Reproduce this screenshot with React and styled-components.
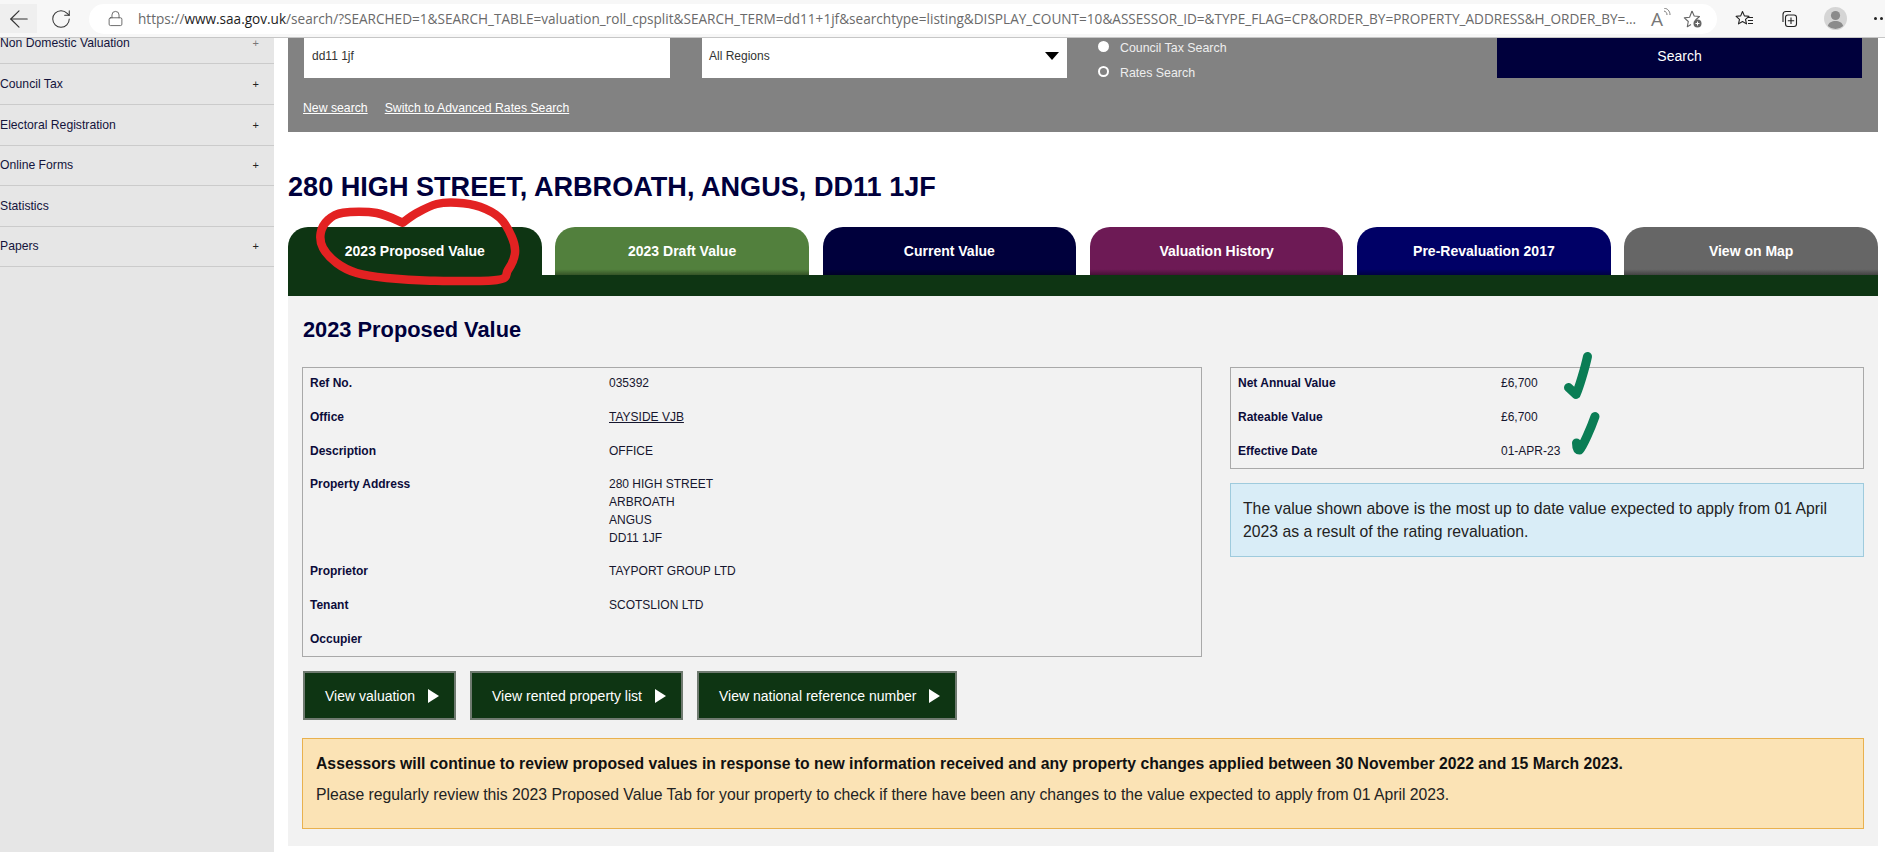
import React from 'react'
import styled, { createGlobalStyle } from 'styled-components'
import { ArrowLeft, RotateCw, Lock } from 'lucide-react'

const GlobalStyle = createGlobalStyle`
  html, body {
    margin: 0;
    background: #fff;
    overflow: hidden;
    font-family: "Liberation Sans", Arial, sans-serif;
  }
  * { box-sizing: border-box; }
`

const Page = styled.div`
  position: relative;
  width: 1885px;
  height: 852px;
  overflow: hidden;
  background: #fff;
`

/* browser chrome */
const Toolbar = styled.div`
  position: relative;
  z-index: 1;
  height: 38px;
  margin-bottom: -1px;
  display: flex;
  align-items: center;
  background: #f7f7f7;
  border-bottom: 1px solid #c6c6c6;
  overflow: hidden;
`
const BackButton = styled.div`
  width: 37px;
  height: 29px;
  flex: none;
  display: flex;
  align-items: center;
  justify-content: center;
  background: #efefef;
  color: #333;
`
const ReloadSlot = styled.div`
  width: 48px;
  margin-right: 4px;
  flex: none;
  display: flex;
  justify-content: center;
  color: #333;
`
const AddressPill = styled.div`
  width: 1628px;
  height: 30px;
  margin-right: 6px;
  flex: none;
  display: flex;
  align-items: center;
  padding: 0 13px 0 18px;
  background: #fff;
  border-radius: 15px;
  color: #555;
`
const Url = styled.div`
  width: 1498px;
  margin-left: 14px;
  flex: none;
  white-space: nowrap;
  overflow: hidden;
  font-family: "Open Sans", sans-serif;
  font-size: 13.6px;
  color: #6a6a6a;
  b { font-weight: 400; color: #1c1c1c; }
`
const ReadAloud = styled.div`
  width: 24px;
  margin-left: 15px;
  flex: none;
  display: flex;
  color: #777;
  font-family: "Open Sans", sans-serif;
  font-size: 19px;
  line-height: 22px;
`
const PillStar = styled.div`
  margin-left: 8px;
  flex: none;
  display: flex;
`
const ToolSlot = styled.div`
  width: 44px;
  flex: none;
  display: flex;
  justify-content: center;
`
const AvatarSlot = styled(ToolSlot)`
  margin-left: 2px;
`
const Dots = styled.div`
  margin-left: 17px;
  flex: none;
  display: flex;
  gap: 3px;
  span {
    width: 3px;
    height: 3px;
    border-radius: 50%;
    background: #222;
  }
`

const Layout = styled.div`
  display: grid;
  grid-template-columns: 274px 1590px;
  column-gap: 14px;
  height: 815px;
`

/* left menu */
const Sidebar = styled.nav`
  background: #e6e6e6;
  overflow: hidden;
`
const MenuRow = styled.div`
  height: ${p => p.$h}px;
  display: flex;
  align-items: flex-end;
  justify-content: space-between;
  padding: 0 15px 11px 0;
  border-bottom: 1px solid #cbcbcb;
  font-size: 12.2px;
  line-height: 18px;
  color: #14143c;
`
const Plus = styled.span`
  color: ${p => (p.$faint ? '#777' : '#222')};
  font-size: 11px;
`

/* search band */
const SearchBand = styled.section`
  height: 95px;
  background: #828282;
  padding: 0 16px;
`
const SearchRow = styled.div`
  height: 41px;
  display: grid;
  grid-template-columns: 366px 365px 366px 365px;
  grid-template-rows: 41px;
  column-gap: 32px;
`
const TextBox = styled.div`
  background: #fff;
  padding: 10px 8px 0;
  font-size: 12px;
  line-height: 18px;
  color: #333;
`
const SelectBox = styled(TextBox)`
  display: flex;
  justify-content: space-between;
  padding-left: 7px;
`
const SelectArrow = styled.i`
  width: 0;
  height: 0;
  margin-top: 5px;
  border-left: 7px solid transparent;
  border-right: 7px solid transparent;
  border-top: 8px solid #000;
`
const RadioGroup = styled.div`
  margin-left: -1px;
  display: flex;
  flex-direction: column;
  gap: 7px;
`
const RadioItem = styled.div`
  display: flex;
  align-items: center;
  gap: 11px;
  height: 18px;
  flex: none;
  font-size: 12.4px;
  color: #eee;
  span { padding-top: 3px; }
`
const RadioDot = styled.i`
  width: 11px;
  height: 11px;
  border-radius: 50%;
  border: 2px solid #fff;
  background: ${p => (p.$on ? '#fff' : 'transparent')};
`
const SearchButton = styled.div`
  background: #00003c;
  color: #fff;
  font-size: 14px;
  line-height: 19px;
  text-align: center;
  padding-top: 10px;
`
const SearchLinks = styled.div`
  margin: 21px 0 0 -1px;
  display: flex;
  gap: 17px;
  font-size: 12.25px;
  line-height: 18px;
  a { color: #fff; text-decoration: underline; }
`

const Title = styled.h1`
  margin: 39px 0 24px;
  font-size: 27.1px;
  line-height: 32px;
  font-weight: 700;
  color: #00003c;
`

/* tabs */
const Tabs = styled.div`
  display: grid;
  grid-template-columns: repeat(6, 1fr);
  column-gap: 13.6px;
`
const Tab = styled.div`
  height: 48px;
  display: flex;
  align-items: center;
  justify-content: center;
  border-radius: 20px 20px 0 0;
  background: ${p => p.$active
    ? p.$bg
    : `linear-gradient(${p.$bg} 88%, rgba(0,0,0,0.35) 100%), ${p.$bg}`};
  color: #fff;
  font-size: 14px;
  font-weight: 700;
`
const TabBand = styled.div`
  height: 21px;
  background: #0e3513;
`

const Panel = styled.section`
  height: 550px;
  background: #f2f2f2;
  padding: 19px 14px 0;
`
const PanelTitle = styled.h2`
  margin: 0 0 22px;
  padding-left: 1px;
  font-size: 21.8px;
  line-height: 30px;
  font-weight: 700;
  color: #00003c;
`
const Columns = styled.div`
  display: grid;
  grid-template-columns: 900px 634px;
  column-gap: 28px;
`
const DataTable = styled.dl`
  margin: 0;
  padding: 6px 8px 8px 7px;
  border: 1px solid #a9a9a9;
  font-size: 12px;
  line-height: 18px;
`
const DataRow = styled.div`
  display: grid;
  grid-template-columns: ${p => p.$label}px 1fr;
  margin-bottom: ${p => p.$after ?? 16}px;
  &:last-child { margin-bottom: 0; }
  dt { font-weight: 700; color: #0c0c3a; min-height: 18px; }
  dd { margin: 0; color: #16162e; }
  a { color: inherit; text-decoration: underline; }
`
const InfoColumn = styled.div`
  display: flex;
  flex-direction: column;
  align-items: stretch;
  align-self: start;
`
const InfoBox = styled.div`
  margin-top: 14px;
  height: 74px;
  padding: 13px 12px 0;
  background: #d9edf7;
  border: 1px solid #9fcbdd;
  font-size: 15.75px;
  line-height: 23px;
  color: #222;
`
const ActionRow = styled.div`
  margin-top: 14px;
  padding-left: 1px;
  display: flex;
  gap: 14px;
`
const ActionButton = styled.div`
  height: 49px;
  display: flex;
  align-items: center;
  gap: 13px;
  padding: 0 15px 0 20px;
  background: #0e3513;
  border: 2px solid #6f7a70;
  color: #fff;
  font-size: 14px;
`
const Arrow = styled.i`
  width: 0;
  height: 0;
  border-top: 7px solid transparent;
  border-bottom: 7px solid transparent;
  border-left: 11px solid #fff;
`
const Notice = styled.div`
  margin-top: 18px;
  height: 91px;
  padding: 13px 13px 0;
  background: #fbe3b5;
  border: 1px solid #e9b14e;
  font-size: 15.75px;
  line-height: 23px;
  color: #111;
  p { margin: 8px 0 0; color: #222; }
  strong { font-weight: 700; }
`

/* the pen marks someone drew over the screenshot */
const InkLayer = styled.svg`
  position: absolute;
  inset: 0;
  z-index: 2;
  pointer-events: none;
`

const smooth = pts => {
  let d = `M${pts[0][0]} ${pts[0][1]}`
  for (let i = 0; i < pts.length - 1; i++) {
    const p0 = pts[i - 1] || pts[i]
    const p1 = pts[i]
    const p2 = pts[i + 1]
    const p3 = pts[i + 2] || p2
    const c1 = [p1[0] + (p2[0] - p0[0]) / 6, p1[1] + (p2[1] - p0[1]) / 6]
    const c2 = [p2[0] - (p3[0] - p1[0]) / 6, p2[1] - (p3[1] - p1[1]) / 6]
    d += ` C${c1[0].toFixed(1)} ${c1[1].toFixed(1)} ${c2[0].toFixed(1)} ${c2[1].toFixed(1)} ${p2[0]} ${p2[1]}`
  }
  return d
}

const ringPoints = [
  [402.7, 222.7], [376.7, 213], [343, 212.7], [328, 220], [320.7, 233], [323, 248],
  [336.7, 263], [356.7, 273], [386.7, 278], [430, 280.7], [496.7, 280], [508, 270],
  [515, 253], [511.7, 236.7], [500, 218], [480, 206.7], [456.7, 202.7], [436.7, 204],
  [416.7, 213], [402.7, 222.7],
]

const menu = [
  { label: 'Non Domestic Valuation', h: 27, plus: true, faint: true },
  { label: 'Council Tax', h: 41, plus: true },
  { label: 'Electoral Registration', h: 41, plus: true },
  { label: 'Online Forms', h: 40, plus: true },
  { label: 'Statistics', h: 41 },
  { label: 'Papers', h: 40, plus: true },
]

const tabs = [
  { label: '2023 Proposed Value', bg: '#0e3513', active: true },
  { label: '2023 Draft Value', bg: '#52803d' },
  { label: 'Current Value', bg: '#00003c' },
  { label: 'Valuation History', bg: '#6d1a55' },
  { label: 'Pre-Revaluation 2017', bg: '#000066' },
  { label: 'View on Map', bg: '#666666' },
]

const StarPlusIcon = () => (
  <svg width="20" height="20" viewBox="0 0 20 20" fill="none" stroke="#666" strokeWidth="1.1">
    <path d="M9 2l2.2 5 5.3.5-4 3.5M8 15.5l-3.7 2.2 1-5.2-4-3.6 5.3-.6L9 2" strokeLinejoin="round" />
    <circle cx="14.5" cy="14.5" r="4" fill="#666" stroke="none" />
    <path d="M14.5 12.5v4M12.5 14.5h4" stroke="#fff" strokeWidth="1" />
  </svg>
)

const FavouritesIcon = () => (
  <svg width="20" height="20" viewBox="0 0 20 20" fill="none" stroke="#222" strokeWidth="1.1">
    <path d="M7.5 2.5l1.9 4.4 4.6.4-3.5 3 1 4.6-4-2.4-4 2.4 1-4.6-3.4-3 4.6-.4z" strokeLinejoin="round" />
    <path d="M13 8.5h5M13 11.5h5M13 14.5h5" />
  </svg>
)

const CollectionsIcon = () => (
  <svg width="20" height="20" viewBox="0 0 20 20" fill="none" stroke="#222" strokeWidth="1.1">
    <path d="M4 13V5.5A3 3 0 0 1 7 2.5h5" />
    <rect x="6.5" y="6" width="11" height="11.5" rx="2.5" />
    <path d="M12 8.5v6.5M8.8 11.8h6.4" />
  </svg>
)

const AvatarIcon = () => (
  <svg width="23" height="23" viewBox="0 0 23 23">
    <circle cx="11.5" cy="11.5" r="11.5" fill="#d5d5d5" />
    <circle cx="11.5" cy="8.5" r="4.6" fill="#8b8b8b" />
    <path d="M3.8 19c1-3.6 4-5 7.7-5s6.7 1.4 7.7 5a11.5 11.5 0 0 1-15.4 0z" fill="#8b8b8b" />
  </svg>
)

export default function App() {
  return (
    <Page>
      <GlobalStyle />
      <Toolbar>
        <BackButton><ArrowLeft size={28} strokeWidth={1} /></BackButton>
        <ReloadSlot><RotateCw size={22} strokeWidth={1.1} /></ReloadSlot>
        <AddressPill>
          <Lock size={17} strokeWidth={1.2} />
          <Url>
            https://<b>www.saa.gov.uk</b>/search/?SEARCHED=1&amp;SEARCH_TABLE=valuation_roll_cpsplit&amp;SEARCH_TERM=dd11+1jf&amp;searchtype=listing&amp;DISPLAY_COUNT=10&amp;ASSESSOR_ID=&amp;TYPE_FLAG=CP&amp;ORDER_BY=PROPERTY_ADDRESS&amp;H_ORDER_BY=...
          </Url>
          <ReadAloud>
            A
            <svg width="8" height="12" viewBox="0 0 8 12" fill="none" stroke="#777">
              <path d="M1 3c2 .5 3 2 3 4M1 0c3.5 .5 6 3 6 7" />
            </svg>
          </ReadAloud>
          <PillStar><StarPlusIcon /></PillStar>
        </AddressPill>
        <ToolSlot><FavouritesIcon /></ToolSlot>
        <ToolSlot><CollectionsIcon /></ToolSlot>
        <AvatarSlot><AvatarIcon /></AvatarSlot>
        <Dots><span /><span /><span /></Dots>
      </Toolbar>

      <Layout>
        <Sidebar>
          {menu.map(item => (
            <MenuRow key={item.label} $h={item.h}>
              <span>{item.label}</span>
              {item.plus && <Plus $faint={item.faint}>+</Plus>}
            </MenuRow>
          ))}
        </Sidebar>

        <main>
          <SearchBand>
            <SearchRow>
              <TextBox>dd11 1jf</TextBox>
              <SelectBox>All Regions<SelectArrow /></SelectBox>
              <RadioGroup>
                <RadioItem><RadioDot $on /><span>Council Tax Search</span></RadioItem>
                <RadioItem><RadioDot /><span>Rates Search</span></RadioItem>
              </RadioGroup>
              <SearchButton>Search</SearchButton>
            </SearchRow>
            <SearchLinks>
              <a>New search</a>
              <a>Switch to Advanced Rates Search</a>
            </SearchLinks>
          </SearchBand>

          <Title>280 HIGH STREET, ARBROATH, ANGUS, DD11 1JF</Title>

          <Tabs>
            {tabs.map(tab => (
              <Tab key={tab.label} $bg={tab.bg} $active={tab.active}>{tab.label}</Tab>
            ))}
          </Tabs>
          <TabBand />

          <Panel>
            <PanelTitle>2023 Proposed Value</PanelTitle>
            <Columns>
              <DataTable>
                <DataRow $label={299}><dt>Ref No.</dt><dd>035392</dd></DataRow>
                <DataRow $label={299}><dt>Office</dt><dd><a>TAYSIDE VJB</a></dd></DataRow>
                <DataRow $label={299} $after={15}><dt>Description</dt><dd>OFFICE</dd></DataRow>
                <DataRow $label={299} $after={15}>
                  <dt>Property Address</dt>
                  <dd>280 HIGH STREET<br />ARBROATH<br />ANGUS<br />DD11 1JF</dd>
                </DataRow>
                <DataRow $label={299}><dt>Proprietor</dt><dd>TAYPORT GROUP LTD</dd></DataRow>
                <DataRow $label={299}><dt>Tenant</dt><dd>SCOTSLION LTD</dd></DataRow>
                <DataRow $label={299}><dt>Occupier</dt><dd /></DataRow>
              </DataTable>
              <InfoColumn>
                <DataTable>
                  <DataRow $label={263}><dt>Net Annual Value</dt><dd>£6,700</dd></DataRow>
                  <DataRow $label={263}><dt>Rateable Value</dt><dd>£6,700</dd></DataRow>
                  <DataRow $label={263}><dt>Effective Date</dt><dd>01-APR-23</dd></DataRow>
                </DataTable>
                <InfoBox>
                  The value shown above is the most up to date value expected to apply from 01 April 2023 as a result of the rating revaluation.
                </InfoBox>
              </InfoColumn>
            </Columns>

            <ActionRow>
              <ActionButton>View valuation<Arrow /></ActionButton>
              <ActionButton>View rented property list<Arrow /></ActionButton>
              <ActionButton>View national reference number<Arrow /></ActionButton>
            </ActionRow>

            <Notice>
              <strong>Assessors will continue to review proposed values in response to new information received and any property changes applied between 30 November 2022 and 15 March 2023.</strong>
              <p>Please regularly review this 2023 Proposed Value Tab for your property to check if there have been any changes to the value expected to apply from 01 April 2023.</p>
            </Notice>
          </Panel>
        </main>
      </Layout>

      <InkLayer width="1885" height="852" viewBox="0 0 1885 852" fill="none" strokeLinecap="round" strokeLinejoin="round">
        <path d={smooth(ringPoints)} stroke="#e32222" strokeWidth="8.5" />
        <path d="M1568.5 387.5L1576 394.5C1579 388 1585 368 1587.5 356.5" stroke="#0a7d55" strokeWidth="9" />
        <path d="M1576.5 443C1576.5 447 1577.5 450 1579.5 450C1583 446 1591 428 1595 416.5" stroke="#0a7d55" strokeWidth="9" />
      </InkLayer>
    </Page>
  )
}
